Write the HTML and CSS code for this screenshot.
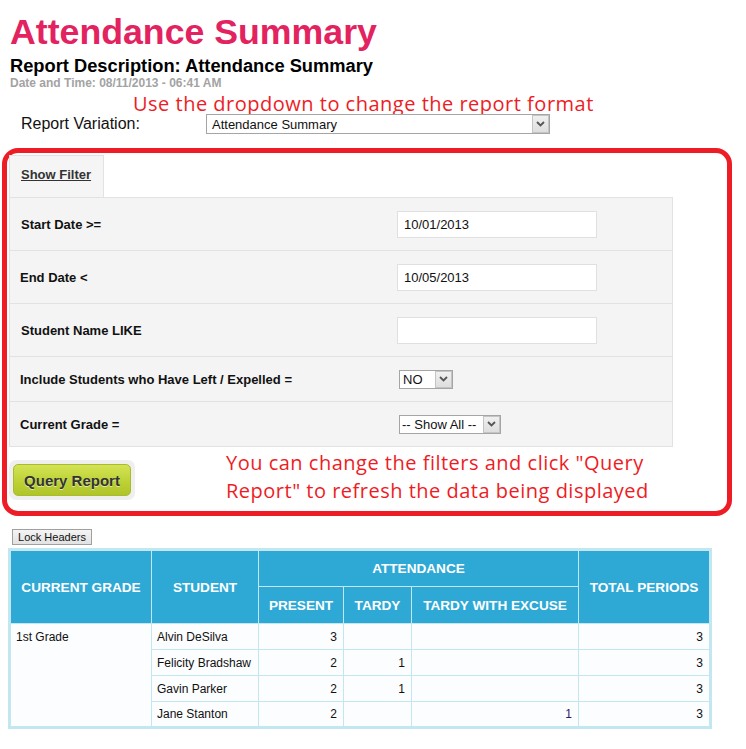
FILE: index.html
```html
<!DOCTYPE html>
<html>
<head>
<meta charset="utf-8">
<title>Attendance Summary</title>
<link rel="stylesheet" href="styles.css">
</head>
<body>
<div class="page">
  <h1 class="title">Attendance Summary</h1>
  <div class="desc">Report Description: Attendance Summary</div>
  <div class="stamp">Date and Time: 08/11/2013 - 06:41 AM</div>
  <div class="note note-top">Use the dropdown to change the report format</div>
  <div class="variation">
    <span class="var-label">Report Variation:</span>
    <span class="select select-wide"><span class="sel-text">Attendance Summary</span><span class="arrow"><svg width="9" height="6" viewBox="0 0 9 6"><path d="M1 1 L4.5 4.5 L8 1" fill="none" stroke="#555" stroke-width="1.8"/></svg></span></span>
  </div>

  <div class="callout">
    <div class="tab"><span class="tab-link">Show Filter</span></div>
    <div class="filters">
      <div class="frow tall">
        <div class="flabel l11">Start Date &gt;=</div>
        <div class="fvalue"><span class="input">10/01/2013</span></div>
      </div>
      <div class="frow tall">
        <div class="flabel">End Date &lt;</div>
        <div class="fvalue"><span class="input">10/05/2013</span></div>
      </div>
      <div class="frow tall">
        <div class="flabel l11">Student Name LIKE</div>
        <div class="fvalue"><span class="input"></span></div>
      </div>
      <div class="frow short">
        <div class="flabel">Include Students who Have Left / Expelled =</div>
        <div class="fvalue"><span class="select select-no"><span class="sel-text">NO</span><span class="arrow"><svg width="9" height="6" viewBox="0 0 9 6"><path d="M1 1 L4.5 4.5 L8 1" fill="none" stroke="#555" stroke-width="1.8"/></svg></span></span></div>
      </div>
      <div class="frow short">
        <div class="flabel">Current Grade =</div>
        <div class="fvalue"><span class="select select-all"><span class="sel-text">-- Show All --</span><span class="arrow"><svg width="9" height="6" viewBox="0 0 9 6"><path d="M1 1 L4.5 4.5 L8 1" fill="none" stroke="#555" stroke-width="1.8"/></svg></span></span></div>
      </div>
    </div>
    <div class="actions">
      <div class="btn-wrap"><span class="btn-query">Query Report</span></div>
      <div class="note note-side">You can change the filters and click "Query<br>Report" to refresh the data being displayed</div>
    </div>
  </div>

  <div class="lock-row"><span class="lock">Lock Headers</span></div>

  <table class="grid">
    <colgroup>
      <col class="c1"><col class="c2"><col class="c3"><col class="c4"><col class="c5"><col class="c6">
    </colgroup>
    <thead>
      <tr class="h1row">
        <th rowspan="2">CURRENT GRADE</th>
        <th rowspan="2">STUDENT</th>
        <th colspan="3">ATTENDANCE</th>
        <th rowspan="2">TOTAL PERIODS</th>
      </tr>
      <tr class="h2row">
        <th>PRESENT</th>
        <th>TARDY</th>
        <th>TARDY WITH EXCUSE</th>
      </tr>
    </thead>
    <tbody>
      <tr>
        <td rowspan="4" class="grade">1st Grade</td>
        <td>Alvin DeSilva</td>
        <td class="num">3</td>
        <td class="num"></td>
        <td class="num"></td>
        <td class="num">3</td>
      </tr>
      <tr>
        <td>Felicity Bradshaw</td>
        <td class="num">2</td>
        <td class="num">1</td>
        <td class="num"></td>
        <td class="num">3</td>
      </tr>
      <tr>
        <td>Gavin Parker</td>
        <td class="num">2</td>
        <td class="num">1</td>
        <td class="num"></td>
        <td class="num">3</td>
      </tr>
      <tr>
        <td>Jane Stanton</td>
        <td class="num">2</td>
        <td class="num"></td>
        <td class="num link">1</td>
        <td class="num">3</td>
      </tr>
    </tbody>
  </table>
</div>
</body>
</html>
```

FILE: styles.css
```css
* { box-sizing: border-box; }
html, body { margin: 0; padding: 0; background: #fff; }
body { font-family: "Liberation Sans", Arial, sans-serif; color: #000; }

.page { width: 746px; }

.title {
  margin: 12px 0 0 10px;
  font-size: 35.7px;
  line-height: 40px;
  font-weight: bold;
  color: #e3235f;
}
.desc {
  margin: 4px 0 0 10px;
  font-size: 18.3px;
  line-height: 20px;
  font-weight: bold;
}
.stamp {
  margin: 1px 0 0 10px;
  font-size: 12px;
  line-height: 13px;
  font-weight: bold;
  color: #a3a3a3;
}
.note {
  font-family: "Open Sans", "Noto Sans", sans-serif;
  color: #ee1c25;
  font-size: 20px;
  letter-spacing: 0.5px;
}
.note-top {
  margin-top: 4px;
  padding-left: 133px;
  line-height: 20px;
}

.variation {
  margin-top: 0;
  display: grid;
  grid-template-columns: 185px 344px;
  align-items: center;
  padding-left: 21px;
  height: 20px;
}
.var-label { font-size: 16px; line-height: 18px; color: #111; }

.select {
  display: flex;
  align-items: stretch;
  background: #fff;
  border: 1px solid #a5a5a5;
  font-size: 13px;
  color: #111;
}
.sel-text { flex: 1; padding-left: 5px; display: flex; align-items: center; white-space: nowrap; }
.arrow {
  width: 17px;
  display: flex;
  align-items: center;
  justify-content: center;
  background: linear-gradient(#f0f0f0, #dedede);
  border: 1px solid #c4c4c4;
}
.select-wide { height: 20px; }
.select-wide .sel-text { padding-left: 5px; }
.select-no { width: 54px; height: 19px; margin-left: 2px; }
.select-no .sel-text { padding-left: 3px; }
.select-all { width: 102px; height: 19px; margin-left: 2px; }
.select-all .sel-text { padding-left: 2px; }

.callout {
  margin: 14px 0 0 2px;
  width: 730px;
  height: 368px;
  border: 5px solid #ee1c25;
  border-radius: 16px;
  padding: 2px 0 0 2px;
}
.tab {
  width: 95px;
  height: 42px;
  background: #f5f5f5;
  border: 1px solid #e2e2e2;
  border-bottom: none;
  padding: 9px 0 0 11px;
}
.tab-link {
  font-size: 13px;
  line-height: 15px;
  font-weight: bold;
  color: #333;
  text-decoration: underline;
}

.filters {
  width: 664px;
  background: #f4f4f4;
  border: 1px solid #e2e2e2;
  border-top: none;
}
.frow {
  display: grid;
  grid-template-columns: 387px 1fr;
  align-items: center;
  border-top: 1px solid #e2e2e2;
}
.frow.tall { height: 53px; }
.frow.short { height: 45px; }
.flabel {
  padding-left: 10px;
  font-size: 13px;
  font-weight: bold;
  color: #111;
}
.flabel.l11 { padding-left: 11px; }
.fvalue { display: flex; align-items: center; }
.input {
  display: flex;
  align-items: center;
  width: 200px;
  height: 27px;
  background: #fff;
  border: 1px solid #e0e0e0;
  padding-left: 6px;
  font-size: 13px;
  color: #111;
}

.actions {
  display: flex;
  align-items: flex-start;
}
.btn-wrap {
  margin-top: 13px;
  padding: 4px;
  background: #efefef;
  border-radius: 7px;
}
.btn-query {
  display: flex;
  align-items: center;
  justify-content: center;
  width: 118px;
  height: 32px;
  border: 1px solid #a9bd2c;
  border-radius: 5px;
  background: linear-gradient(#d3e355, #bcd033 60%, #b0c52b);
  font-size: 15px;
  font-weight: bold;
  color: #333;
  text-shadow: 0 1px 0 rgba(255,255,255,0.6);
}
.note-side {
  margin: 2px 0 0 91px;
  line-height: 28px;
}

.lock-row { margin: 13px 0 0 12px; height: 16px; display: flex; }
.lock {
  display: flex;
  align-items: center;
  height: 16px;
  width: 80px;
  justify-content: center;
  font-size: 11px;
  color: #111;
  background: linear-gradient(#f4f4f4, #e2e2e2);
  border: 1px solid #a0a0a0;
}

.grid {
  margin: 3px 0 0 8px;
  width: 701px;
  table-layout: fixed;
  border-collapse: collapse;
  border: 3px solid #c3e7f1;
}
.c1 { width: 142px; }
.c2 { width: 107px; }
.c3 { width: 85px; }
.c4 { width: 68px; }
.c5 { width: 167px; }
.c6 { width: 132px; }

.grid th {
  background: #2ea9d5;
  color: #fff;
  font-size: 13.6px;
  font-weight: bold;
  text-align: center;
  border: 1px solid #c3e7f1;
  padding: 0 4px;
  white-space: nowrap;
}
.h1row th { height: 37px; }
.h2row th { height: 37px; }
.grid td {
  background: #fbfdfe;
  border: 1px solid #c3e7f1;
  font-size: 12px;
  line-height: 14px;
  color: #111;
  height: 26px;
  padding: 0 5px;
  white-space: nowrap;
}
.grid td.num { text-align: right; padding-right: 6px; }
.grid td.grade { vertical-align: top; padding-top: 6px; }
.grid td.link { color: #2a1a66; }
```
